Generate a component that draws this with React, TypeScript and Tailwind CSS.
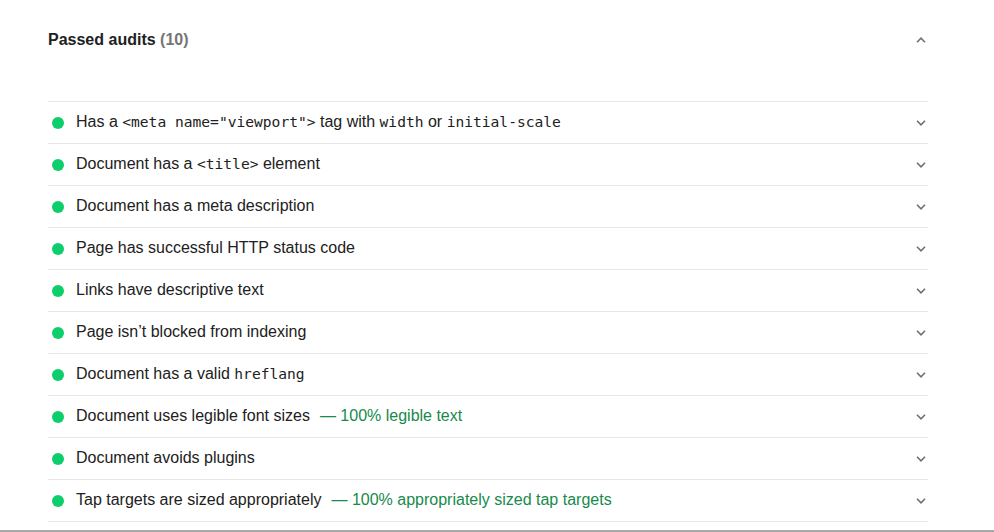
import type { ReactNode } from "react";

const mono = "font-['DejaVu_Sans_Mono',monospace] text-[14.6px]";

const Code = ({ children }: { children: ReactNode }) => (
  <code className={mono}>{children}</code>
);

const audits: { title: ReactNode; display?: string }[] = [
  {
    title: (
      <>
        Has a <Code>&lt;meta name="viewport"&gt;</Code> tag with <Code>width</Code> or{" "}
        <Code>initial-scale</Code>
      </>
    ),
  },
  {
    title: (
      <>
        Document has a <Code>&lt;title&gt;</Code> element
      </>
    ),
  },
  { title: "Document has a meta description" },
  { title: "Page has successful HTTP status code" },
  { title: "Links have descriptive text" },
  { title: "Page isn\u2019t blocked from indexing" },
  {
    title: (
      <>
        Document has a valid <Code>hreflang</Code>
      </>
    ),
  },
  { title: "Document uses legible font sizes", display: "\u2014 100% legible text" },
  { title: "Document avoids plugins" },
  {
    title: "Tap targets are sized appropriately",
    display: "\u2014 100% appropriately sized tap targets",
  },
];

function Chevron({ up = false }: { up?: boolean }) {
  return (
    <div className="flex w-[14px] shrink-0 items-center justify-center">
      <svg width="10" height="6" viewBox="0 0 10 6" fill="none">
        <polyline
          points={up ? "1,5.2 5,1.2 9,5.2" : "1,0.8 5,4.8 9,0.8"}
          stroke="#707070"
          strokeWidth="1.6"
        />
      </svg>
    </div>
  );
}

export default function App() {
  return (
    <div className="h-[532px] w-[994px] overflow-hidden bg-white font-['Liberation_Sans',Arial,sans-serif] text-[#212121]">
      <div className="mx-[48px] w-[880px]">
        {/* ── Header ───────────────────────────── */}
        <div className="mt-[28px] flex h-[24px] items-center">
          <div className="flex-1 text-[16px] font-bold leading-[24px]">
            Passed audits <span className="text-[#757575]">(10)</span>
          </div>
          <Chevron up />
        </div>

        {/* ── Audit rows ───────────────────────── */}
        <div className="mt-[49px] border-b border-[#e6e6e6]">
          {audits.map((a, i) => (
            <div
              key={i}
              className="flex h-[42px] items-center border-t border-[#e6e6e6]"
            >
              <span className="ml-[4px] mr-[12px] h-[12px] w-[12px] shrink-0 rounded-full bg-[#0cce6b]" />
              <div className="-mt-[2px] flex-1 whitespace-nowrap text-[16px] leading-[20px]">
                {a.title}
                {a.display && (
                  <span className="ml-[10px] text-[#178a4c]">{a.display}</span>
                )}
              </div>
              <Chevron />
            </div>
          ))}
        </div>
      </div>
      <div className="mt-[8px] h-[2px] w-full bg-[#a8a8a8]" />
    </div>
  );
}
